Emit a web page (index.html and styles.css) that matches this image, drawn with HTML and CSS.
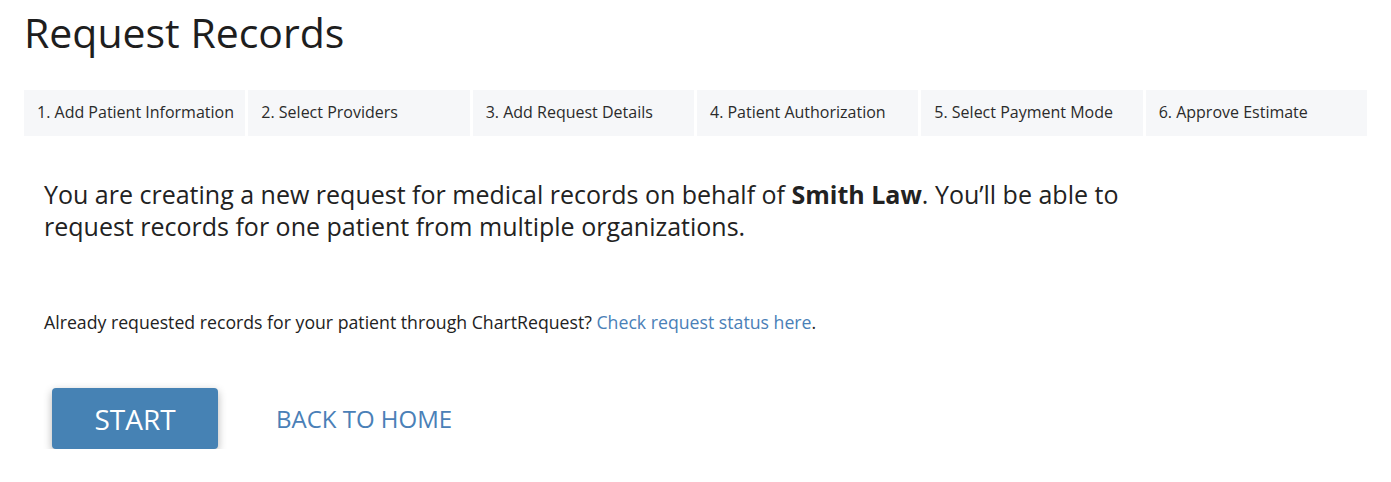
FILE: index.html
```html
<!DOCTYPE html>
<html lang="en">
<head>
<meta charset="utf-8">
<title>Request Records</title>
<link rel="stylesheet" href="styles.css">
</head>
<body>
<div class="page">
  <h1 class="title">Request Records</h1>
  <ol class="steps">
    <li class="step">1. Add Patient Information</li>
    <li class="step">2. Select Providers</li>
    <li class="step">3. Add Request Details</li>
    <li class="step">4. Patient Authorization</li>
    <li class="step">5. Select Payment Mode</li>
    <li class="step">6. Approve Estimate</li>
  </ol>
  <div class="content">
    <p class="intro">You are creating a new request for medical records on behalf of <strong>Smith Law</strong>. You’ll be able to<br>request records for one patient from multiple organizations.</p>
    <p class="status">Already requested records for your patient through ChartRequest? <a class="link" href="#">Check request status here</a>.</p>
    <div class="actions">
      <button class="btn-start" type="button">START</button>
      <a class="btn-home" href="#">BACK TO HOME</a>
    </div>
  </div>
</div>
</body>
</html>
```

FILE: styles.css
```css
html, body {
  margin: 0;
  padding: 0;
  background: #ffffff;
}
body {
  font-family: "Open Sans", "Liberation Sans", sans-serif;
  color: #222;
}
.page {
  padding: 0 24px;
}
.title {
  margin: 0;
  padding-top: 9px;
  font-size: 41px;
  font-weight: 400;
  line-height: 46px;
  color: #1e1e1e;
}
.steps {
  list-style: none;
  margin: 35px 0 0;
  padding: 0;
  display: grid;
  grid-template-columns: repeat(6, 1fr);
  gap: 3px;
}
.step {
  background: #f6f7f9;
  height: 46px;
  padding-left: 13px;
  display: flex;
  align-items: center;
  padding-bottom: 2px;
  box-sizing: border-box;
  font-size: 16px;
  color: #2b2b2b;
  white-space: nowrap;
}
.content {
  padding: 0 20px;
}
.intro {
  margin: 42px 0 0;
  font-size: 25px;
  line-height: 32px;
  color: #222;
}
.intro strong {
  font-weight: 700;
}
.status {
  margin: 68px 0 0;
  font-size: 17.7px;
  line-height: 24px;
  color: #222;
}
.link {
  color: #4a80b7;
  text-decoration: none;
}
.actions {
  margin-top: 54px;
  padding-left: 8px;
  display: flex;
  align-items: center;
  gap: 58px;
}
.btn-start {
  width: 166px;
  height: 61px;
  border: 0;
  border-radius: 4px;
  background: #4682b4;
  color: #fff;
  font-family: inherit;
  font-size: 28px;
  box-shadow: 0 3px 9px rgba(0, 0, 0, 0.3);
  cursor: pointer;
}
.btn-home {
  color: #4a80b7;
  font-size: 24px;
  text-decoration: none;
}
```
